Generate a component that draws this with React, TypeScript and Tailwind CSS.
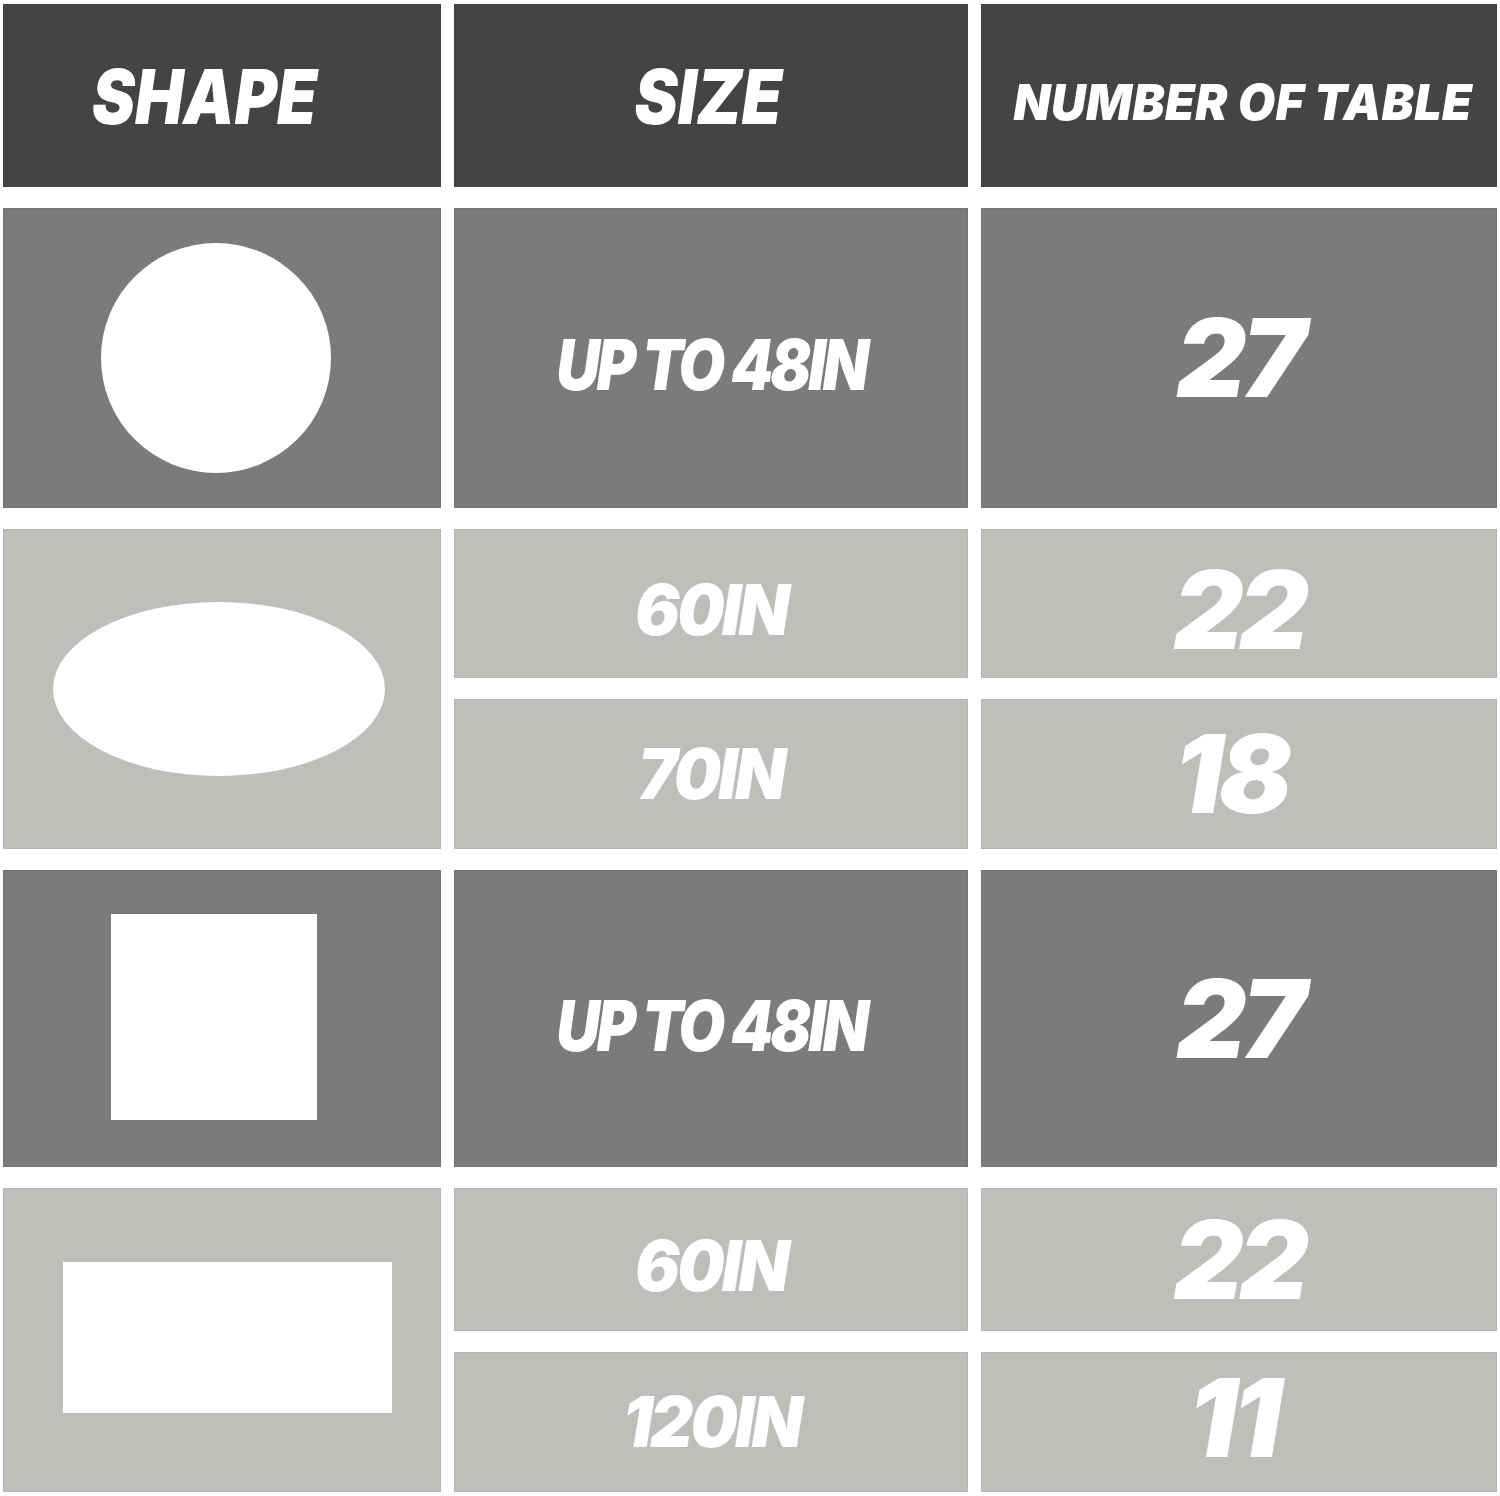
const DARK = 'bg-[#7b7b7b]';
const LIGHT = 'bg-[#c0bebb]';

function Cell({ className, children }: { className: string; children?: React.ReactNode }) {
  return (
    <div className={`flex items-center justify-center text-white border border-black/5 ${className}`}>
      {children}
    </div>
  );
}

function Size({ children, wide = false, className = '' }: { children: React.ReactNode; wide?: boolean; className?: string }) {
  return (
    <span
      className={`italic font-black text-[70px] leading-none whitespace-nowrap inline-block ${
        wide ? 'tracking-[-0.04em] scale-x-[0.95]' : 'tracking-[-0.05em] scale-x-[0.86]'
      } ${className}`}
    >
      {children}
    </span>
  );
}

function Count({ children, className = '' }: { children: React.ReactNode; className?: string }) {
  return (
    <span className={`italic font-black text-[108px] leading-none tracking-[-0.04em] inline-block ${className}`}>
      {children}
    </span>
  );
}

export default function App() {
  return (
    <div className="w-[1500px] h-[1496px] bg-white px-[3px] py-[4px] [font-family:Inter,'Liberation_Sans',sans-serif]">
      <div className="grid grid-cols-[438px_514px_516px] grid-rows-[183px_300px_149px_150px_297px_143px_140px] gap-x-[13px] gap-y-[21px]">
        {/* header */}
        <Cell className="bg-[#444444]">
          <span className="italic font-black text-[76px] leading-none inline-block scale-x-[0.85] -translate-x-[17px]">SHAPE</span>
        </Cell>
        <Cell className="bg-[#444444]">
          <span className="italic font-black text-[76px] leading-none inline-block scale-x-[0.855] -translate-x-[3px]">SIZE</span>
        </Cell>
        <Cell className="bg-[#444444]">
          <span className="italic font-black text-[50px] leading-none tracking-[0.01em] whitespace-nowrap inline-block scale-x-[0.96] translate-x-[4px] translate-y-[6px]">
            NUMBER OF TABLE
          </span>
        </Cell>

        {/* round */}
        <Cell className={DARK}>
          <div className="w-[230px] h-[230px] rounded-full bg-white -translate-x-[6px]" />
        </Cell>
        <Cell className={DARK}>
          <Size className="translate-y-[7px]">UP TO 48IN</Size>
        </Cell>
        <Cell className={DARK}>
          <Count>27</Count>
        </Cell>

        {/* oval */}
        <Cell className={`${LIGHT} row-span-2`}>
          <div className="w-[332px] h-[174px] rounded-[50%] bg-white -translate-x-[3px]" />
        </Cell>
        <Cell className={LIGHT}>
          <Size wide className="translate-y-[6px]">60IN</Size>
        </Cell>
        <Cell className={LIGHT}>
          <Count className="translate-y-[6px]">22</Count>
        </Cell>
        <Cell className={LIGHT}>
          <Size wide>70IN</Size>
        </Cell>
        <Cell className={LIGHT}>
          <Count className="-translate-x-[8px]">18</Count>
        </Cell>

        {/* square */}
        <Cell className={DARK}>
          <div className="w-[206px] h-[206px] bg-white -translate-x-[8px] -translate-y-[2px]" />
        </Cell>
        <Cell className={DARK}>
          <Size className="translate-y-[7px]">UP TO 48IN</Size>
        </Cell>
        <Cell className={DARK}>
          <Count>27</Count>
        </Cell>

        {/* rectangle */}
        <Cell className={`${LIGHT} row-span-2`}>
          <div className="w-[329px] h-[151px] bg-white translate-x-[5px] -translate-y-[3px]" />
        </Cell>
        <Cell className={LIGHT}>
          <Size wide className="translate-y-[6px]">60IN</Size>
        </Cell>
        <Cell className={LIGHT}>
          <Count>22</Count>
        </Cell>
        <Cell className={LIGHT}>
          <Size wide>120IN</Size>
        </Cell>
        <Cell className={LIGHT}>
          <Count className="-translate-x-[6px] -translate-y-[4px]">11</Count>
        </Cell>
      </div>
    </div>
  );
}
